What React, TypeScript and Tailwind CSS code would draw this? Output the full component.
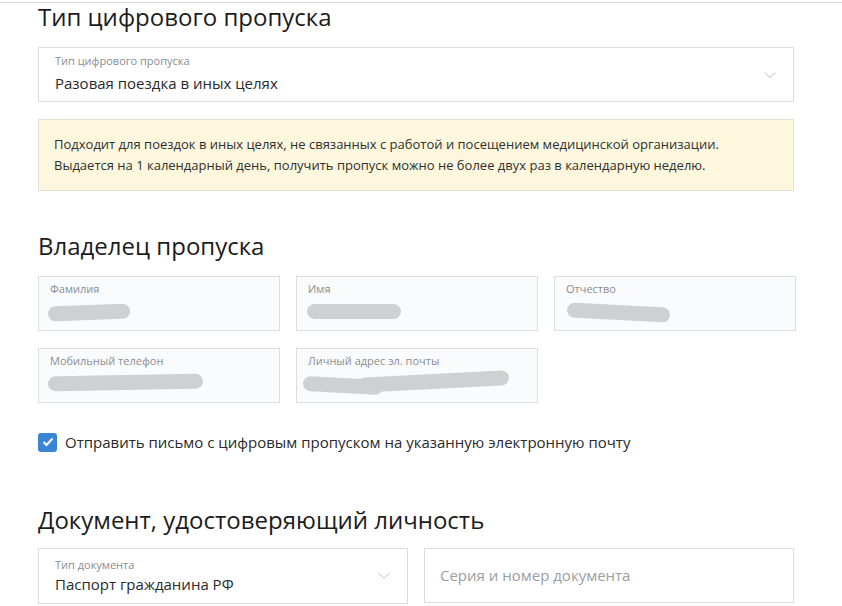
import React from 'react';

const font = { fontFamily: '"Open Sans", Lato, sans-serif' };

// Redaction blob over personal data
const Blob: React.FC<{ className: string }> = ({ className }) => (
  <div className={`absolute h-[15px] rounded-full bg-[#cfd0d2] ${className}`} />
);

const Field: React.FC<{ label: string; children?: React.ReactNode }> = ({ label, children }) => (
  <div className="relative h-[55px] w-[242px] border border-[#dcdde0] bg-[#fafbfc] px-[11px] pt-[5px]">
    <div className="text-[11px] leading-[14px] text-[#8a8d91]">{label}</div>
    {children}
  </div>
);

const Chevron = () => (
  <svg width="12" height="8" viewBox="0 0 12 8" fill="none" stroke="#b5b8bc" strokeWidth="1">
    <path d="M1 1.5l5 5 5-5" />
  </svg>
);

export default function App() {
  return (
    <div className="min-h-[606px] w-[842px] overflow-hidden bg-white text-[#222]" style={font}>
      <div className="h-[3px] border-b border-[#d9d9d9]" />
      <div className="px-[38px]">
        {/* Тип пропуска */}
        <h2 className="mt-[0px] text-[24px] leading-[28px] font-normal text-[#1c1c1c]">Тип цифрового пропуска</h2>
        <div className="mt-[16px] flex h-[55px] w-[756px] items-center justify-between border border-[#dcdde0] bg-white pl-[16px] pr-[17px]">
          <div className="-mt-[4px]">
            <div className="text-[11px] leading-[14px] text-[#8a8d91]">Тип цифрового пропуска</div>
            <div className="mt-[6px] text-[15px] leading-[18px] text-[#2a2a2a]">Разовая поездка в иных целях</div>
          </div>
          <Chevron />
        </div>

        <div className="mt-[17px] h-[72px] w-[756px] border border-[#e6e2cf] bg-[#fdf7de] px-[15px] pt-[14px] text-[13px] leading-[21px] text-[#2f2f2f]">
          <p>Подходит для поездок в иных целях, не связанных с работой и посещением медицинской организации.</p>
          <p>Выдается на 1 календарный день, получить пропуск можно не более двух раз в календарную неделю.</p>
        </div>

        {/* Владелец */}
        <h2 className="mt-[41px] text-[24px] leading-[28px] font-normal text-[#1c1c1c]">Владелец пропуска</h2>
        <div className="mt-[16px] flex gap-[16px]">
          <Field label="Фамилия">
            <Blob className="left-[9px] top-[28px] w-[82px] -rotate-2" />
          </Field>
          <Field label="Имя">
            <Blob className="left-[10px] top-[27px] w-[94px]" />
          </Field>
          <Field label="Отчество">
            <Blob className="left-[12px] top-[28px] w-[103px] rotate-3" />
          </Field>
        </div>
        <div className="mt-[17px] flex gap-[16px]">
          <Field label="Мобильный телефон">
            <Blob className="left-[9px] top-[26px] w-[155px] -rotate-1" />
          </Field>
          <Field label="Личный адрес эл. почты">
            <Blob className="left-[6px] top-[29px] w-[80px] rotate-3" />
            <Blob className="left-[60px] top-[25px] w-[152px] -rotate-3" />
          </Field>
        </div>

        <label className="mt-[29px] flex items-center gap-[8px] text-[15px] leading-[20px] text-[#2a2a2a]">
          <span className="flex h-[19px] w-[19px] items-center justify-center rounded-[3px] bg-[#3a84d4]">
            <svg width="12" height="10" viewBox="0 0 12 10" fill="none" stroke="white" strokeWidth="2">
              <path d="M1.5 5l3 3 6-6.5" />
            </svg>
          </span>
          Отправить письмо с цифровым пропуском на указанную электронную почту
        </label>

        {/* Документ */}
        <h2 className="mt-[54px] text-[24px] leading-[28px] font-normal text-[#1c1c1c]">Документ, удостоверяющий личность</h2>
        <div className="mt-[14px] flex gap-[16px]">
          <div className="flex h-[56px] w-[370px] items-center justify-between border border-[#dcdde0] bg-white pl-[16px] pr-[17px]">
            <div className="-mt-[2px]">
              <div className="text-[11px] leading-[14px] text-[#8a8d91]">Тип документа</div>
              <div className="mt-[3px] text-[15px] leading-[18px] text-[#2a2a2a]">Паспорт гражданина РФ</div>
            </div>
            <Chevron />
          </div>
          <div className="flex h-[55px] w-[370px] items-center border border-[#dcdde0] bg-white px-[15px] text-[15px] text-[#9a9da1]">
            Серия и номер документа
          </div>
        </div>
      </div>
    </div>
  );
}
